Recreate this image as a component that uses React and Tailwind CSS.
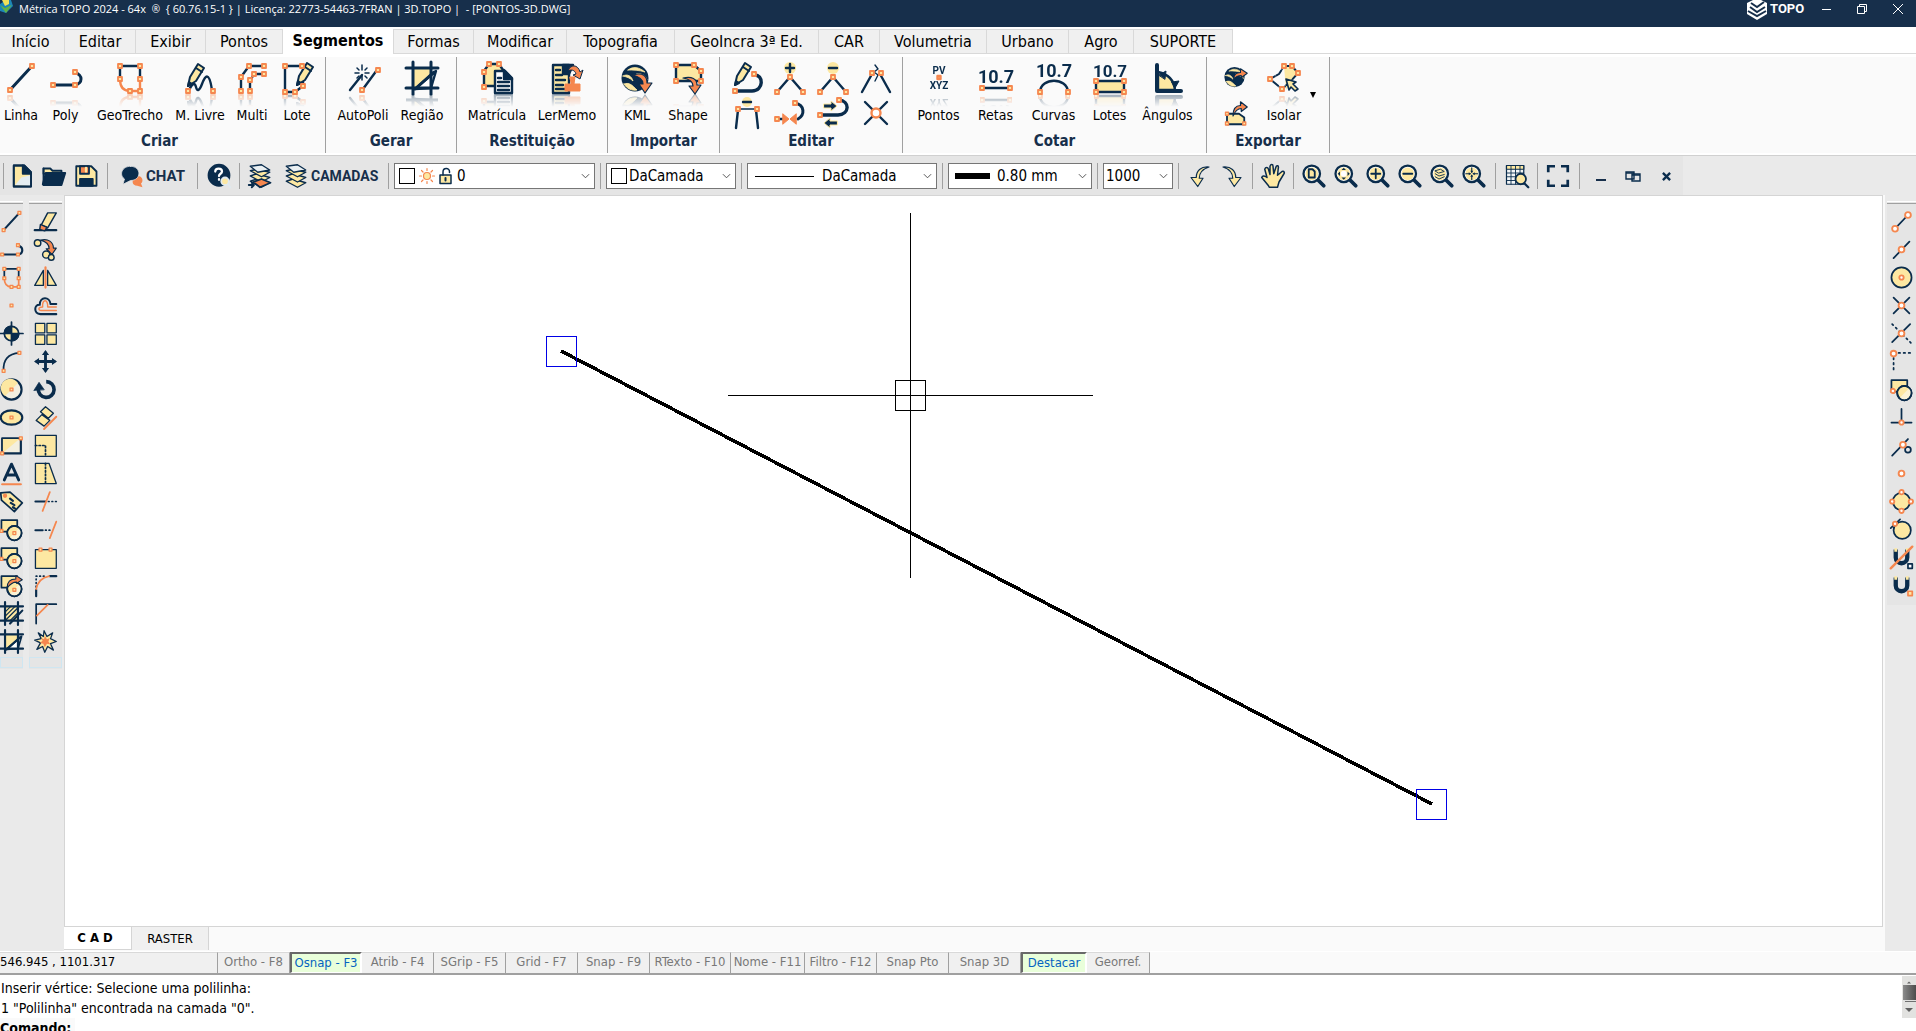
import { clsx } from 'clsx';

const NAVY = '#0a2c4c';
const ORANGE = '#f5874f';
const YELLOW = '#fde8a2';

/** Square vertex handle used by most of the drawing icons. */
function Node({ x, y }) {
  return <rect x={x - 2} y={y - 2} width="4" height="4" fill={YELLOW} stroke={ORANGE} strokeWidth="1.8" />;
}

/** Round snap handle. */
function Dot({ x, y, r = 4 }) {
  return <circle cx={x} cy={y} r={r} fill="#fff" stroke={ORANGE} strokeWidth="2.6" />;
}

function Pencil({ x = 0, y = 0 }) {
  return (
    <g transform={`translate(${x} ${y})`}>
      <path d="M3 23 5 14 13 1 19 5 11 18Z" fill={YELLOW} strokeWidth="2" />
      <path d="M11 5 17 9M3 23 4 19 7 21Z" strokeWidth="2" fill={NAVY} />
    </g>
  );
}

function Lens({ children }) {
  return (
    <>
      <path d="M20 20 29 29" strokeWidth="5" />
      <circle cx="13" cy="13" r="11" fill="#fff" strokeWidth="3" />
      <circle cx="13" cy="13" r="8.5" fill={YELLOW} stroke="none" />
      {children}
    </>
  );
}

function Globe() {
  return (
    <>
      <circle cx="14" cy="16" r="13.5" fill={NAVY} stroke="none" />
      <path d="M7 8C12 4 18 5 24 10 18 8 12 8 7 8ZM2 14C7 11 11 15 12 19 9 16 6 15 2 14ZM3 22C8 20 11 23 16 28 11 29 6 27 3 22ZM16 12C21 11 25 14 26 18 23 15 20 14 16 12Z" fill={YELLOW} stroke={YELLOW} strokeWidth="0.8" />
    </>
  );
}

function Measure({ size, y }) {
  return (
    <text x="16" y={y} fontSize={size} textAnchor="middle" fontFamily="'Liberation Sans Narrow', Roboto, sans-serif" fontWeight="700" fill={NAVY} stroke="none">
      10.7
    </text>
  );
}

const shapes = (
  <>
    <path d="M2 3H24V19H2Z" fill={YELLOW} />
    <circle cx="20" cy="21" r="10" fill={YELLOW} />
    <path d="M13 28 27 14A10 10 0 0 1 13 28Z" fill="#fbf3d6" stroke="none" />
    <circle cx="20" cy="21" r="10" />
  </>
);

const regionFrame = <path d="M0 6H32M0 26H32M7 0V32M25 0V32" strokeWidth="3" />;

const stack = (
  <>
    <path d="M3 23 12 20 29 25 18 31Z" fill={YELLOW} strokeWidth="1.8" />
    <path d="M3 16 12 13 29 18 18 24Z" fill={YELLOW} strokeWidth="1.8" />
    <path d="M3 9 12 7 29 11 18 17Z" fill={YELLOW} strokeWidth="1.8" />
    <path d="M3 3 18 1 29 8 13 11Z" fill="#eaf0f3" strokeWidth="1.8" />
  </>
);

const magnet = (
  <>
    <path d="M8 5V16A8 8 0 0 0 24 16V5" strokeWidth="6" strokeLinecap="butt" />
    <path d="M8 3V8M24 3V8" stroke={YELLOW} strokeWidth="4" strokeLinecap="butt" />
  </>
);

// All drawings live on a 32x32 grid and inherit a navy stroke from Icon
const ICONS = {
  line: <><path d="M5 28 27 4" strokeWidth="3" /><Node x={5} y={28} /><Node x={27} y={4} /></>,
  poly: <><path d="M3 23H25C33 22 33 12 25 11" strokeWidth="3" /><Node x={3} y={23} /><Node x={25} y={23} /><Node x={25} y={10} /></>,
  geo: (
    <>
      <path d="M6 17V4H26V17" />
      <path d="M6 17C6 25 9 29 16 29H26V17" stroke={ORANGE} />
      <Node x={6} y={4} /><Node x={26} y={4} /><Node x={6} y={17} /><Node x={26} y={17} /><Node x={16} y={29} /><Node x={26} y={29} />
    </>
  ),
  freehand: <><path d="M5 28C9 20 11 21 12 25S15 30 18 22 25 8 28 28" /><Pencil x={1} y={1} /><Node x={4} y={29} /><Node x={29} y={29} /></>,
  multi: (
    <>
      <path d="M5 29V15L13 4H28M14 29V19L18 12H28" />
      <Node x={5} y={29} /><Node x={5} y={15} /><Node x={13} y={4} /><Node x={28} y={4} />
      <Node x={14} y={29} /><Node x={14} y={18} /><Node x={18} y={12} /><Node x={28} y={12} />
    </>
  ),
  lot: <><path d="M4 4H22V24L14 30H4Z" /><Pencil x={13} y={0} /><Node x={4} y={4} /><Node x={21} y={4} /><Node x={22} y={24} /><Node x={14} y={30} /><Node x={4} y={30} /></>,
  autopoly: (
    <>
      <path d="M3 28 15 13M16 27 30 8" />
      <path d="M15 3V8M15 14V18M8 11H12M18 11H22M10 6 12 8M20 6 18 8M10 16 12 14M20 16 18 14" strokeWidth="1.5" />
      <Node x={15} y={28} /><Node x={31} y={8} />
    </>
  ),
  region: <><path d="M7 6H25V26H7Z" fill={YELLOW} stroke="none" /><path d="M9 27 30 9 25 26Z" fill="#fff" />{regionFrame}<path d="M9 27 28 10" strokeWidth="3" /></>,
  deed: (
    <>
      <path d="M3 24V9L8 2H18L22 8V24Z" fill={YELLOW} />
      <Node x={3} y={25} /><Node x={3} y={10} /><Node x={8} y={2} /><Node x={18} y={2} />
      <path d="M14 9H24L31 16V31H14Z" fill="#fff" />
      <path d="M23 8 31 17H23Z" fill={NAVY} />
      <path d="M17 16H20M17 20H28M17 24H28M17 28H28" />
    </>
  ),
  memo: (
    <>
      <path d="M2 3H18V31H2Z" fill={YELLOW} />
      <path d="M12 3 22 3 18 12H12Z" fill={NAVY} />
      <path d="M5 8H9M5 13H11M5 18H14M5 23H12M5 27H14" />
      <path d="M17 9C19 2 27 2 29 10L32 8 29 17 22 13 25 12C24 8 20 7 17 9Z" stroke={NAVY} fill={ORANGE} strokeWidth="1" />
      <path d="M19 15H24L23 22H29V29H14V22H20Z" stroke={ORANGE} fill={ORANGE} strokeWidth="1" />
    </>
  ),
  kml: <><Globe /><path d="M12 13C22 10 26 14 26 21H31L24 31 18 22H22C22 17 18 15 12 13Z" fill={ORANGE} strokeWidth="1.2" /></>,
  shape: (
    <>
      <path d="M4 3H22L29 9V19H4Z" fill={YELLOW} />
      <path d="M11 16C20 14 25 17 25 23H29L23 32 17 24H21C21 19 17 17 11 16Z" fill={ORANGE} strokeWidth="1.2" />
      <Node x={4} y={3} /><Node x={22} y={3} /><Node x={29} y={9} /><Node x={4} y={19} /><Node x={29} y={19} />
    </>
  ),
  editPoly: <><path d="M4 29H21C33 29 33 12 23 13" strokeWidth="3.4" /><Pencil x={1} y={0} /><Node x={23} y={12} /><Node x={4} y={29} /></>,
  addVertex: (
    <>
      <path d="M3 30 16 15 29 30" />
      <circle cx="16" cy="6" r="6" fill={YELLOW} stroke="none" /><path d="M12 6H20M16 2V10" />
      <Node x={16} y={15} /><Node x={3} y={30} /><Node x={29} y={30} />
    </>
  ),
  removeVertex: (
    <>
      <path d="M3 30 16 15 29 30" />
      <circle cx="16" cy="6" r="6" fill={YELLOW} stroke="none" /><path d="M12 6H20" />
      <Node x={16} y={15} /><Node x={3} y={30} /><Node x={29} y={30} />
    </>
  ),
  breakPoly: <><path d="M2 30 12 12M30 30 20 12" /><path d="M15 3 18 7 14 10 18 13 15 19" strokeWidth="1.4" /><Node x={12} y={11} /><Node x={21} y={11} /></>,
  removeSide: (
    <>
      <path d="M5 31 7 13M27 31 25 13" /><path d="M7 12H25" strokeWidth="1.4" />
      <circle cx="16" cy="5" r="5" fill={YELLOW} stroke="none" /><path d="M12 5H20" />
      <Node x={7} y={12} /><Node x={26} y={12} />
    </>
  ),
  joinEnds: (
    <>
      <path d="M21 6C31 8 31 18 24 22" strokeWidth="3" />
      <path d="M3 22H10" />
      <path d="M9 17 15 22 9 27ZM22 17 16 22 22 27Z" fill={ORANGE} stroke={ORANGE} strokeWidth="1" />
      <Node x={3} y={22} /><Node x={21} y={6} />
    </>
  ),
  invert: (
    <>
      <path d="M3 18H21C33 17 33 4 22 3" strokeWidth="3.4" />
      <path d="M7 7H14V4L20 9 14 14V11H7ZM20 24H13V21L7 26 13 31V28H20Z" fill={NAVY} stroke={YELLOW} strokeWidth="1" />
      <Node x={22} y={3} /><Node x={3} y={18} />
    </>
  ),
  cross: <><path d="M5 5 27 27M27 5 5 27" /><circle cx="16" cy="16" r="4.5" fill="#fff" stroke={ORANGE} /></>,
  points: (
    <>
      <g fontFamily="Roboto, sans-serif" fontWeight="700" fontSize="10" textAnchor="middle" fill={NAVY} stroke="none">
        <text x="16" y="12">PV</text>
        <text x="16" y="27">XYZ</text>
      </g>
      <rect x="14.5" y="14" width="3" height="3" fill={YELLOW} stroke={ORANGE} />
    </>
  ),
  lines: <><Measure size={18} y={21} /><path d="M2 26H30" /><Node x={2} y={26} /><Node x={30} y={26} /></>,
  curves: <><Measure size={18} y={15} /><path d="M2 30C3 15 29 15 30 30" /><Node x={2} y={30} /><Node x={30} y={30} /></>,
  lots: (
    <>
      <Measure size={17} y={15} />
      <path d="M2 19H30V30H2Z" fill={YELLOW} />
      <Node x={2} y={19} /><Node x={30} y={19} /><Node x={2} y={30} /><Node x={30} y={30} />
    </>
  ),
  angles: (
    <>
      <path d="M6 10C16 12 22 18 23 28H6Z" fill={YELLOW} />
      <path d="M5 3V29H29" strokeWidth="4" />
      <path d="M7 13 14 9 13 17ZM20 20 27 19 23 26Z" fill={NAVY} strokeWidth="1" />
    </>
  ),
  globeOut: <><Globe /><path d="M13 19C13 13 17 10 22 10V5L31 11 23 17V14C19 14 16 15 13 19Z" fill={ORANGE} strokeWidth="1.4" /></>,
  shapeOut: (
    <>
      <path d="M4 17H20L27 22V31H4Z" fill={YELLOW} />
      <path d="M12 20C12 10 16 6 22 6V1L31 8 23 14V10C18 10 15 13 12 20Z" fill={ORANGE} strokeWidth="1.6" />
      <Node x={4} y={17} /><Node x={4} y={30} /><Node x={27} y={30} />
    </>
  ),
  isolate: (
    <>
      <path d="M16 4H24L30 11 22 20 18 28Z" fill={YELLOW} stroke="none" />
      <path d="M16 4H24L30 11 22 20 14 27 2 17 11 12Z" strokeDasharray="7 2" strokeWidth="2" />
      <path d="M18 17 28 20 25 22 30 27 27 29 23 25 21 28Z" fill={YELLOW} strokeWidth="1.6" />
      <Node x={16} y={4} /><Node x={24} y={4} /><Node x={30} y={11} /><Node x={2} y={17} /><Node x={14} y={27} />
    </>
  ),
  newFile: <><path d="M5 2H19L28 11V30H5Z" fill={YELLOW} /><path d="M7 28 15 18 27 15V29Z" fill="#e4edf2" stroke="none" /><path d="M17 2 28 13H17Z" fill={NAVY} /><path d="M5 2H19L28 11V30H5Z" /></>,
  open: <><path d="M2 6H11L14 9H26V13H2Z" fill={YELLOW} /><path d="M1 27 5 12H31L26 28H2Z" fill={NAVY} /><path d="M2 6V27" /></>,
  save: (
    <>
      <path d="M3 3H23L30 10V29H3Z" fill={YELLOW} />
      <path d="M8 3H20V13H8Z" fill={ORANGE} /><path d="M16 5V10" stroke={YELLOW} strokeWidth="3" />
      <path d="M8 29V20H25V29Z" fill={NAVY} />
    </>
  ),
  chat: (
    <>
      <path d="M20 17C28 13 33 22 28 26L30 31 23 29C16 29 15 22 20 17Z" fill={ORANGE} stroke="none" />
      <path d="M14 3C29 3 29 22 14 22L4 27 6 20C-2 14 3 3 14 3Z" fill={NAVY} stroke="#e5e5e5" strokeWidth="1" />
    </>
  ),
  help: (
    <>
      <circle cx="16" cy="15" r="14" fill={NAVY} />
      <path d="M11 10C11 5 20 5 20 10 20 13 16 13 16 16M16 20V21" stroke="#fff" strokeWidth="3" />
      <circle cx="24" cy="23" r="5" fill={YELLOW} stroke="#dfe9ef" /><path d="M28 27 31 31" stroke="#dfe9ef" />
    </>
  ),
  layersMove: <>{stack}<path d="M7 24 18 20 30 25 16 31Z" fill={ORANGE} /><path d="M1 28H8M5 25 8 28 5 31" /></>,
  layers: stack,
  sun: (
    <>
      <circle cx="16" cy="16" r="7" fill={YELLOW} stroke={ORANGE} />
      <path d="M16 1V5M16 27V31M1 16H5M27 16H31M5 5 8 8M24 24 27 27M27 5 24 8M8 24 5 27" stroke={ORANGE} />
    </>
  ),
  lock: <><path d="M4 14H26V31H4Z" fill={YELLOW} strokeWidth="3" /><path d="M10 14V8C10-1 23-1 23 7V9" strokeWidth="3" /><path d="M15 20V25" strokeWidth="4" /></>,
  undo: <path d="M28 4C17 3 11 9 11 18H4L13 30 20 19H15C15 12 19 7 28 4Z" fill={YELLOW} strokeWidth="1.6" />,
  redo: <path d="M4 4C15 3 21 9 21 18H28L19 30 12 19H17C17 12 13 7 4 4Z" fill={YELLOW} strokeWidth="1.6" />,
  hand: <path d="M10 29 1 18C2 15 5 16 8 18L5 7C6 4 9 4 10 7L12 14 12 3C13 0 16 0 16 3L17 13 20 4C21 1 24 2 23 6L22 15 28 10C31 9 32 12 30 14L24 24 22 31H11Z" fill={YELLOW} strokeWidth="2" />,
  zoomPage: <Lens><path d="M9 7H14L17 10V18H9Z" fill={YELLOW} /></Lens>,
  zoomExtents: <Lens><path d="M13 5 10 8H16ZM13 21 10 18H16ZM5 13 8 10V16ZM21 13 18 10V16Z" fill={NAVY} stroke="none" /><circle cx="13" cy="13" r="4" fill="#fff" stroke="none" /></Lens>,
  zoomIn: <Lens><path d="M7 13H19M13 7V19" /></Lens>,
  zoomOut: <Lens><path d="M7 13H19" /></Lens>,
  zoomLayer: <Lens><path d="M7 9 14 7 19 10 12 12ZM7 13 12 16 19 14M7 17 12 20 19 17" strokeWidth="1.2" /></Lens>,
  zoomCenter: <Lens><path d="M13 5V11M13 15V21M5 13H11M15 13H21" strokeWidth="1.5" /><path d="M11 9H15L13 12ZM11 17H15L13 14ZM9 11V15L12 13ZM17 11V15L14 13Z" fill={NAVY} stroke="none" /></Lens>,
  table: (
    <>
      <path d="M2 2H25V27H2Z" fill="#f3f6f7" strokeWidth="1.6" /><path d="M2 2H25V7H2Z" fill={YELLOW} strokeWidth="1.6" />
      <path d="M2 12H25M2 17H25M2 22H25M8 2V27M14 2V27M20 2V27" strokeWidth="1.2" />
      <path d="M26 26 31 31" strokeWidth="3" /><circle cx="21" cy="20" r="7" fill={YELLOW} />
    </>
  ),
  frame: <path d="M3 11V3H12M20 3H29V11M29 21V29H20M12 29H3V21" strokeWidth="3.6" strokeLinecap="butt" strokeLinejoin="miter" />,
  dot: <Node x={16} y={16} />,
  target: <><path d="M16 0V32M0 16H32" /><circle cx="16" cy="16" r="10" fill={YELLOW} /><path d="M16 16V6A10 10 0 0 0 6 16ZM16 16V26A10 10 0 0 0 26 16Z" fill={NAVY} /></>,
  arc: <><path d="M5 29C4 14 11 5 27 4" /><Node x={5} y={29} /><Node x={27} y={4} /></>,
  circle: <><circle cx="16" cy="16" r="14" fill="#f3efdf" strokeWidth="3" /><path d="M7 25A13 13 0 1 1 25 7Z" fill={YELLOW} stroke="none" /><Node x={16} y={16} /></>,
  ellipse: <><ellipse cx="16" cy="16" rx="15" ry="10" fill={YELLOW} strokeWidth="3" /><Node x={16} y={16} /></>,
  rect: <><path d="M3 6H29V27H3Z" fill="#f3efdf" strokeWidth="3" /><path d="M4 26V7H27Z" fill={YELLOW} stroke="none" /><Node x={3} y={27} /><Node x={29} y={6} /></>,
  text: <><path d="M6 25 16 3 26 25M10 18H22" strokeWidth="4" /><path d="M3 31H29" stroke={ORANGE} strokeWidth="3" /></>,
  tag: <><path d="M1 4 14 3 31 18 20 30 2 14Z" fill={YELLOW} /><path d="M14 12 18 15M15 18 20 21M18 24 21 26" strokeWidth="3" /><circle cx="7" cy="8" r="3" fill={ORANGE} stroke="none" /></>,
  block: <>{shapes}<Node x={20} y={21} /><Node x={2} y={18} /></>,
  blockOut: <>{shapes}<path d="M10 19C10 10 16 7 22 7V2L31 8 23 13V11C18 11 15 13 10 19Z" fill={ORANGE} strokeWidth="1.4" /><Node x={20} y={22} /></>,
  hatch: (
    <>
      <path d="M7 6H25V26H7Z" fill={YELLOW} stroke="none" />{regionFrame}
      <path d="M8 13 15 6M8 19 21 6M8 25 25 8M14 26 25 15" strokeWidth="1.6" /><path d="M14 30 31 12" strokeWidth="3" />
    </>
  ),
  eraser: <><path d="M1 28H31" strokeWidth="3" /><path d="M10 21 19 4H31L19 25Z" fill={YELLOW} strokeWidth="2" /><path d="M9 20 18 24 15 29 8 27Z" fill={ORANGE} strokeWidth="2" /></>,
  copy: <><path d="M9 3C20 0 27 6 27 14H31L25 23 17 15H21C21 9 17 5 9 3Z" fill={ORANGE} strokeWidth="1.6" /><circle cx="5" cy="7" r="4.5" fill={YELLOW} strokeWidth="2" /><circle cx="17" cy="23" r="5" fill={YELLOW} strokeWidth="2" /><circle cx="24" cy="27" r="4" fill={YELLOW} strokeWidth="2" /></>,
  mirror: <><path d="M13 6V27H1ZM19 6V27H31Z" fill={YELLOW} strokeWidth="1.8" /><path d="M16 2V30" stroke={ORANGE} strokeWidth="3" /></>,
  offset: <><path d="M31 28H9C-1 27 0 14 8 15 8 3 22 3 23 14H31" strokeWidth="2.8" /><path d="M31 23H10C5 22 6 18 12 18 11 6 20 7 19 18H31" stroke={ORANGE} strokeWidth="2" /></>,
  array: <path d="M2 2H15V15H2ZM18 2H31V15H18ZM2 18H15V31H2ZM18 18H31V31H18Z" fill={YELLOW} strokeWidth="1.8" />,
  move: <><path d="M16 4V28M4 16H28" strokeWidth="4" /><path d="M16 0 21 7H11ZM16 32 21 25H11ZM0 16 7 11V21ZM32 16 25 11V21Z" fill={NAVY} stroke="none" /></>,
  rotate: <><path d="M17 5A11 11 0 1 1 6 15" strokeWidth="5" strokeLinecap="butt" /><path d="M0 17 7 6 14 16Z" fill={NAVY} strokeWidth="1" /></>,
  align: <><path d="M9 8 16 1 27 10 20 17ZM3 20 11 12 22 20 14 28Z" fill={YELLOW} strokeWidth="1.8" /><path d="M14 32 31 15" stroke={ORANGE} strokeWidth="2.6" /></>,
  scale: <><path d="M2 2H31V31H2Z" fill={YELLOW} strokeWidth="1.8" /><path d="M2 16H16V31" strokeDasharray="2 3" /></>,
  stretch: <><path d="M2 2H21L31 30H2Z" fill={YELLOW} strokeWidth="1.8" /><path d="M16 2V30" strokeDasharray="2 3" /></>,
  trim: <><path d="M2 16H16" strokeWidth="3" /><path d="M20 16H31" strokeDasharray="1 4" /><path d="M22 3 12 29" stroke={ORANGE} /></>,
  extend: <><path d="M2 17H12" strokeWidth="3" /><path d="M16 17H24" strokeDasharray="1 4" /><path d="M31 5 22 28" stroke={ORANGE} /></>,
  splitBox: <><path d="M2 5H31V31H2Z" fill={YELLOW} strokeWidth="1.8" /><Node x={9} y={5} /><Node x={23} y={5} /></>,
  fillet: <><path d="M3 31V22M22 3H31" strokeWidth="3" /><path d="M3 18V3H18" strokeDasharray="1 4" /><path d="M3 21C5 11 11 5 21 3" stroke={ORANGE} /></>,
  chamfer: <><path d="M3 30V3H31" /><path d="M4 19 19 4" stroke={ORANGE} /></>,
  explode: (
    <>
      <path d="M14 1 18 9 26 4 23 12 31 16 23 19 27 28 19 23 15 31 12 23 4 27 9 18 1 14 10 12 6 4 13 9Z" fill={YELLOW} strokeWidth="1.8" />
      <path d="M15 8 18 13 22 11 20 16 23 20 18 19 15 24 13 19 8 18 12 15 10 11 14 13Z" fill={ORANGE} stroke="none" />
    </>
  ),
  snapEnd: <><path d="M7 26 25 7" /><Dot x={7} y={26} /><Dot x={25} y={7} /></>,
  snapMid: <><path d="M5 28 27 5" /><Dot x={16} y={16} /></>,
  snapCenter: <><circle cx="16" cy="16" r="14" fill={YELLOW} /><Dot x={16} y={16} r={3} /></>,
  snapInt: <><path d="M5 5 27 27M27 5 5 27" /><Dot x={16} y={16} /></>,
  snapApp: <><path d="M28 3 3 28" /><path d="M3 3 29 29" strokeDasharray="2 5" /><Dot x={16} y={16} /></>,
  snapExt: <><path d="M12 4H31M5 11V31" strokeDasharray="2 5" /><Dot x={5} y={5} /></>,
  snapInsert: <>{shapes}<Dot x={4} y={18} r={3} /></>,
  snapPerp: <><path d="M16 4V22M2 23H30" /><Dot x={16} y={23} r={3} /></>,
  snapNear: <><path d="M3 30 25 7" /><circle cx="25" cy="22" r="4" /><Dot x={18} y={15} /></>,
  snapNode: <Dot x={16} y={16} />,
  snapQuad: <><circle cx="16" cy="16" r="12" fill={YELLOW} /><Dot x={16} y={3} r={3} /><Dot x={16} y={29} r={3} /><Dot x={3} y={16} r={3} /><Dot x={29} y={16} r={3} /></>,
  snapTan: <><circle cx="17" cy="17" r="12" fill={YELLOW} /><path d="M1 14 14 2" /><Dot x={7} y={8} r={3} /></>,
  snapOff: <>{magnet}<path d="M1 31 31 1" stroke={ORANGE} strokeWidth="3.4" /><path d="M25 25H31V31H25Z" fill="#fff" /></>,
  snapOn: <>{magnet}<path d="M25 24H31V30H25Z" fill={YELLOW} stroke={ORANGE} /></>,
};

function Icon({ name, className }) {
  return (
    <svg
      viewBox="0 0 32 32"
      className={clsx('block shrink-0 overflow-visible', className)}
      fill="none"
      stroke={NAVY}
      strokeWidth="2.4"
      strokeLinecap="round"
      strokeLinejoin="round"
      aria-hidden="true"
    >
      {ICONS[name]}
    </svg>
  );
}

const TABS = [
  ['Início', 'w-[65px] pr-[3px]'],
  ['Editar', 'w-[71px]'],
  ['Exibir', 'w-[70px]'],
  ['Pontos', 'w-[77px]'],
  ['Segmentos', 'w-[111px]'],
  ['Formas', 'w-[80px]'],
  ['Modificar', 'w-[93px]'],
  ['Topografia', 'w-[108px]'],
  ['GeoIncra 3ª Ed.', 'w-[144px]'],
  ['CAR', 'w-[61px]'],
  ['Volumetria', 'w-[107px]'],
  ['Urbano', 'w-[82px]'],
  ['Agro', 'w-[65px]'],
  ['SUPORTE', 'w-[99px]'],
];

const LEFT_A = ['line', 'poly', 'geo', 'dot', 'target', 'arc', 'circle', 'ellipse', 'rect', 'text', 'tag', 'block', 'block', 'blockOut', 'hatch', 'region'];
const LEFT_B = ['eraser', 'copy', 'mirror', 'offset', 'array', 'move', 'rotate', 'align', 'scale', 'stretch', 'trim', 'extend', 'splitBox', 'fillet', 'chamfer', 'explode'];
const RIGHT = ['snapEnd', 'snapMid', 'snapCenter', 'snapInt', 'snapApp', 'snapExt', 'snapInsert', 'snapPerp', 'snapNear', 'snapNode', 'snapQuad', 'snapTan', 'snapOff', 'snapOn'];
const EDIT_TOOLS = ['editPoly', 'addVertex', 'removeVertex', 'breakPoly', 'removeSide', 'joinEnds', 'invert', 'cross'];
const ZOOMS = ['zoomPage', 'zoomExtents', 'zoomIn', 'zoomOut', 'zoomLayer', 'zoomCenter'];

const STATUS = [
  ['Ortho - F8', 'w-[72px]'],
  ['Osnap - F3', 'w-[72px]', true],
  ['Atrib - F4', 'w-[72px]'],
  ['SGrip - F5', 'w-[72px]'],
  ['Grid - F7', 'w-[72px]'],
  ['Snap - F9', 'w-[72px]'],
  ['RTexto - F10', 'w-[81px]'],
  ['Nome - F11', 'w-[74px]'],
  ['Filtro - F12', 'w-[72px]'],
  ['Snap Pto', 'w-[72px]'],
  ['Snap 3D', 'w-[72px]'],
  ['Destacar', 'w-[66px]', true],
  ['Georref.', 'w-[63px]'],
];

function TitleBar() {
  return (
    <header className="flex h-[27px] shrink-0 items-start bg-[#172f4b] text-white">
      <svg viewBox="0 0 14 14" className="h-[14px] w-[14px]" aria-hidden="true">
        <path d="M0 4 6 0H11L13 6 6 13 0 11Z" fill="#1c86b8" />
        <path d="M0 5 5 8 12 5 6 13Z" fill="#62b146" />
        <path d="M2 0H9V4L5 6Z" fill="#f2e15a" />
      </svg>
      <h1 className="ml-[5px] font-['Open_Sans',sans-serif] text-[11px] leading-[18px] whitespace-pre">
        Métrica TOPO 2024 - 64x  <span className="text-[10px]">®</span> {' { 60.76.15-1 } | Licença: 22773-54463-7FRAN | 3D.TOPO |  - [PONTOS-3D.DWG]'}
      </h1>
      <div className="ml-auto flex h-[18px] items-center">
        <svg viewBox="0 0 22 22" className="h-[22px] w-[22px]" fill="none" stroke="#172f4b" aria-hidden="true">
          <path d="M1 5 11 0 21 5V16L11 22 1 16Z" fill="#fff" stroke="none" />
          <path d="M5 5 11 9 18 4M4 9 11 14 19 9M2 13 11 18 20 13" strokeWidth="2" />
        </svg>
        <span className="ml-[2px] w-[34px] font-[Roboto,sans-serif] text-[13px] leading-4 font-bold">TOPO</span>
        <button aria-label="Minimizar" className="ml-[4px] flex h-[18px] w-[36px] items-center justify-center">
          <span className="h-px w-[9px] bg-white" />
        </button>
        <button aria-label="Restaurar" className="flex h-[18px] w-[36px] items-center justify-center">
          <svg viewBox="0 0 10 10" className="h-[10px] w-[10px]" fill="none" stroke="#fff">
            <path d="M.5 2.5H7.5V9.5H.5ZM2.5 2.5V.5H9.5V7.5H7.5" />
          </svg>
        </button>
        <button aria-label="Fechar" className="flex h-[18px] w-[36px] items-center justify-center">
          <svg viewBox="0 0 10 10" className="h-[10px] w-[10px]" fill="none" stroke="#fff">
            <path d="M0 0 10 10M10 0 0 10" />
          </svg>
        </button>
      </div>
    </header>
  );
}

function RibbonTabs() {
  return (
    <nav className="flex h-[30px] shrink-0 items-start border-b-[3px] border-white bg-white pt-[2px] text-[16px]" role="tablist">
      {TABS.map(([label, width]) => {
        const active = label === 'Segmentos';
        return (
          <button
            key={label}
            role="tab"
            aria-selected={active}
            className={clsx(
              'h-[25px] shrink-0 border-r border-[#d9d9d9] text-center leading-[23px] whitespace-nowrap',
              width,
              active ? 'bg-white pb-[3px] font-bold' : 'border-t border-b bg-[#f0f0f0]',
            )}
          >
            {label}
          </button>
        );
      })}
      <div className="h-[25px] flex-1 border-b border-[#d9d9d9]" />
    </nav>
  );
}

function BigTool({ icon, label, width }) {
  return (
    <button className={clsx('flex shrink-0 flex-col items-center', width)}>
      <span className="mb-[13px] block [-webkit-box-reflect:below_0px_linear-gradient(transparent_60%,rgba(0,0,0,0.4))]">
        <Icon name={icon} className="h-[32px] w-[32px]" />
      </span>
      <span className="text-[14px] leading-4 whitespace-nowrap">{label}</span>
    </button>
  );
}

function Group({ title, width, children }) {
  return (
    <section className={clsx('flex shrink-0 flex-col border-r border-[#a0a0a0]', width)}>
      <div className="flex h-[73px] justify-center pt-[5px]">{children}</div>
      <h2 className="text-center text-[15px] leading-[23px] font-bold text-[#172f4b]">{title}</h2>
    </section>
  );
}

function Ribbon() {
  return (
    <div className="flex h-[96px] shrink-0 bg-[#fafafa]">
      <Group title="Criar" width="w-[326px] pr-[6px]">
        <BigTool icon="line" label="Linha" width="w-[42px]" />
        <BigTool icon="poly" label="Poly" width="w-[47px]" />
        <BigTool icon="geo" label="GeoTrecho" width="w-[82px]" />
        <BigTool icon="freehand" label="M. Livre" width="w-[58px]" />
        <BigTool icon="multi" label="Multi" width="w-[46px]" />
        <BigTool icon="lot" label="Lote" width="w-[44px]" />
      </Group>
      <Group title="Gerar" width="w-[131px]">
        <span className="w-[3px]" />
        <BigTool icon="autopoly" label="AutoPoli" width="w-[59px]" />
        <BigTool icon="region" label="Região" width="w-[59px]" />
      </Group>
      <Group title="Restituição" width="w-[151px]">
        <BigTool icon="deed" label="Matrícula" width="w-[70px]" />
        <BigTool icon="memo" label="LerMemo" width="w-[70px]" />
      </Group>
      <Group title="Importar" width="w-[112px]">
        <BigTool icon="kml" label="KML" width="w-[51px]" />
        <BigTool icon="shape" label="Shape" width="w-[51px]" />
        <span className="w-[2px]" />
      </Group>
      <Group title="Editar" width="w-[183px]">
        <div className="grid grid-cols-4 content-start gap-x-[11px] gap-y-[3px]">
          {EDIT_TOOLS.map((name) => (
            <button key={name} aria-label={name}>
              <Icon name={name} className="h-[32px] w-[32px]" />
            </button>
          ))}
        </div>
      </Group>
      <Group title="Cotar" width="w-[304px]">
        <BigTool icon="points" label="Pontos" width="w-[56px]" />
        <BigTool icon="lines" label="Retas" width="w-[58px]" />
        <BigTool icon="curves" label="Curvas" width="w-[58px]" />
        <BigTool icon="lots" label="Lotes" width="w-[54px]" />
        <BigTool icon="angles" label="Ângulos" width="w-[62px]" />
      </Group>
      <Group title="Exportar" width="w-[123px]">
        <div className="flex w-[44px] flex-col items-center gap-3 pt-[3px]">
          <button aria-label="Exportar KML"><Icon name="globeOut" className="h-[24px] w-[24px]" /></button>
          <button aria-label="Exportar Shape"><Icon name="shapeOut" className="h-[24px] w-[24px]" /></button>
        </div>
        <BigTool icon="isolate" label="Isolar" width="w-[52px]" />
        <button aria-label="Mais opções" className="flex w-[12px] items-center pb-[3px]">
          <svg viewBox="0 0 6 6" className="h-[6px] w-[6px]"><path d="M0 0H6L3 6Z" fill="#000" /></svg>
        </button>
      </Group>
    </div>
  );
}

function Separator({ tight }) {
  return <span className={clsx('h-[26px] w-px shrink-0 bg-[#a0a0a0]', tight ? 'mx-[4px]' : 'mx-[5px]')} />;
}

function Tool({ icon, label }) {
  return (
    <button aria-label={label || icon} className="flex h-[30px] w-[32px] shrink-0 items-center justify-center">
      <Icon name={icon} className="h-[24px] w-[24px]" />
    </button>
  );
}

function Combo({ label, value, width, selectClass, children }) {
  return (
    <div className={clsx('flex h-[26px] shrink-0 items-center border border-[#767676] bg-white pr-[4px] text-[15px]', width)}>
      {children}
      <select aria-label={label} className={clsx('min-w-0 flex-1 appearance-none bg-transparent leading-5 outline-none', selectClass)} defaultValue={value}>
        <option>{value}</option>
      </select>
      <svg viewBox="0 0 10 6" className="h-[6px] w-[9px] shrink-0" fill="none" stroke="#444" aria-hidden="true">
        <path d="M1 1 5 5 9 1" />
      </svg>
    </div>
  );
}

function Toolbar() {
  return (
    <div className="flex h-[39px] shrink-0 bg-[#eaeaea]">
      <div className="flex items-center bg-[#e5e5e5] pt-px">
        <span className="mr-[2px] h-[26px] w-[4px] border-r border-[#a0a0a0]" />
        <Tool icon="newFile" label="Novo" />
        <Tool icon="open" label="Abrir" />
        <Tool icon="save" label="Salvar" />
        <Separator />
        <button className="flex h-[30px] w-[79px] items-center justify-center gap-[2px] font-[Roboto,sans-serif] text-[15px] font-bold text-[#172f4b]">
          <Icon name="chat" className="h-[24px] w-[24px]" />
          CHAT
        </button>
        <Separator />
        <Tool icon="help" label="Ajuda" />
        <Separator tight />
        <Tool icon="layersMove" label="Mover camadas" />
        <button className="ml-[8px] flex h-[30px] w-[99px] items-center gap-[3px] font-[Roboto,sans-serif] text-[14px] font-bold text-[#172f4b]">
          <Icon name="layers" className="h-[24px] w-[24px]" />
          CAMADAS
        </button>
        <Separator />
        <Combo label="Camada" value="0" width="w-[201px]" selectClass="pl-[3px]">
          <span className="ml-[4px] h-[16px] w-[16px] border border-black" />
          <Icon name="sun" className="ml-[4px] h-[16px] w-[16px]" />
          <Icon name="lock" className="ml-[3px] h-[16px] w-[16px]" />
        </Combo>
        <Separator />
        <Combo label="Cor" value="DaCamada" width="w-[130px]" selectClass="pl-[2px]">
          <span className="ml-[4px] h-[16px] w-[16px] border border-black" />
        </Combo>
        <Separator />
        <Combo label="Tipo de linha" value="DaCamada" width="w-[190px]" selectClass="pl-[8px]">
          <span className="ml-[7px] h-px w-[59px] bg-black" />
        </Combo>
        <Separator />
        <Combo label="Espessura" value="0.80 mm" width="w-[144px]" selectClass="pl-[7px]">
          <span className="ml-[6px] h-[6px] w-[35px] bg-black" />
        </Combo>
        <Separator />
        <Combo label="Escala" value="1000" width="w-[70px]" selectClass="pl-[2px]" />
        <Separator />
        <Tool icon="undo" label="Desfazer" />
        <Tool icon="redo" label="Refazer" />
        <Separator tight />
        <Tool icon="hand" label="Mover vista" />
        <Separator tight />
        {ZOOMS.map((name) => <Tool key={name} icon={name} />)}
        <Separator />
        <Tool icon="table" label="Tabela" />
        <Separator tight />
        <Tool icon="frame" label="Tela cheia" />
        <Separator />
        <button aria-label="Minimizar desenho" className="flex h-[30px] w-[32px] items-center justify-center pt-[8px]">
          <span className="h-[2px] w-[10px] bg-[#172f4b]" />
        </button>
        <button aria-label="Restaurar desenho" className="flex h-[30px] w-[32px] items-center justify-center">
          <svg viewBox="0 0 16 11" className="h-[11px] w-[16px]" fill="none" stroke={NAVY} strokeWidth="1.4">
            <path d="M1 1H9V8H1ZM7 3H15V10H7Z" /><path d="M1 2H9M7 4H15" />
          </svg>
        </button>
        <button aria-label="Fechar desenho" className="flex h-[30px] w-[34px] items-center justify-center">
          <svg viewBox="0 0 10 10" className="h-[9px] w-[9px]" fill="none" stroke={NAVY} strokeWidth="2.6">
            <path d="M1 1 9 9M9 1 1 9" />
          </svg>
        </button>
      </div>
    </div>
  );
}

function SideBar({ icons, className, slot }) {
  return (
    <div className={clsx('flex flex-col self-start bg-[#e5e5e5]', className)}>
      <span className="mb-[3px] h-[3px] border-t border-b border-t-white border-b-[#a0a0a0]" />
      {icons.map((name, i) => (
        <button key={`${name}${i}`} aria-label={name} className="flex h-[28px] items-center justify-center">
          <Icon name={name} className="h-[23px] w-[23px]" />
        </button>
      ))}
      {slot && <span className="mt-[2px] mb-px h-[11px] border border-[#cfe6f1]" />}
    </div>
  );
}

/** Drawing area: the selected polyline, its grips and the pick cursor. */
function Canvas() {
  return (
    <svg className="block min-h-0 w-full flex-1" shapeRendering="crispEdges" fill="none" role="img" aria-label="Desenho">
      <path d="M496 155 1367 608" stroke="#000" strokeWidth="3.5" />
      <path d="M481.500 140.500H511.500V170.500H481.500ZM1351.500 593.500H1381.500V623.500H1351.500Z" stroke="#0000e6" />
      <path d="M845.500 17V382M663 199.500H1028M830.500 184.500H860.500V214.500H830.500Z" stroke="#000" />
    </svg>
  );
}

function StatusBar() {
  return (
    <div className="flex h-[24px] shrink-0 items-stretch border-t border-b-2 border-t-white border-b-[#a0a0a0] bg-[#fafafa] text-[13px]">
      <output className="w-[218px] shrink-0 border-t border-r border-t-[#d9d9d9] border-r-[#a0a0a0] bg-[#f0f0f0] leading-[18px]">
        546.945 , 1101.317
      </output>
      {STATUS.map(([label, width, on]) => (
        <button
          key={label}
          aria-pressed={!!on}
          className={clsx(
            'shrink-0 text-center leading-[18px] whitespace-nowrap',
            width,
            on
              ? 'border-t-2 border-r-2 border-b border-l-2 border-t-[#696969] border-r-white border-b-white border-l-[#696969] bg-[#e9ffda] text-[#0563c1]'
              : 'border-t border-r border-t-[#d9d9d9] border-r-[#a0a0a0] bg-[#f0f0f0] pb-[2px] text-[#787878]',
          )}
        >
          {label}
        </button>
      ))}
    </div>
  );
}

function CommandLog() {
  return (
    <div className="flex h-[56px] shrink-0 overflow-hidden bg-white">
      <div className="flex-1 pt-[3px] text-[14px] leading-5">
        <p className="pl-px">Inserir vértice: Selecione uma polilinha:</p>
        <p className="pl-px">1 "Polilinha" encontrada na camada "0".</p>
        <p className="inline-block bg-[#fafafa] pr-1 font-bold">Comando:</p>
      </div>
      <div className="mt-px flex h-[42px] w-[14px] flex-col items-center bg-[#e2e2e0]">
        <svg viewBox="0 0 8 4" className="mt-[5px] h-[3px] w-[4px]"><path d="M4 0 8 4H0Z" fill="#606060" /></svg>
        <span className="mt-px h-[15px] w-[13px] self-end bg-linear-to-r from-[#8c8c8c] to-[#4c4c4c]" />
        <span className="mt-px h-px w-[11px] self-end bg-[#707070]" />
        <svg viewBox="0 0 8 4" className="mt-[6px] h-[4px] w-[8px]"><path d="M0 0H8L4 4Z" fill="#606060" /></svg>
      </div>
    </div>
  );
}

export default function App() {
  return (
    <div className="flex h-screen flex-col overflow-hidden bg-white font-['DejaVu_Sans_Condensed','DejaVu_Sans',sans-serif] text-black">
      <TitleBar />
      <RibbonTabs />
      <Ribbon />
      <div className="h-[3px] shrink-0 border-b border-[#d0d0d0] bg-white" />
      <Toolbar />
      <div className="flex min-h-0 flex-1 bg-[#eaeaea]">
        <div className="flex w-[64px] shrink-0 gap-[6px] pt-[6px]">
          <SideBar icons={LEFT_A} className="w-[23px]" slot />
          <SideBar icons={LEFT_B} className="w-[33px]" slot />
        </div>
        <main className="flex min-w-0 flex-1 flex-col bg-[#fafafa]">
          <div className="mr-[2px] flex min-h-0 flex-1 flex-col border border-[#d5d5d5] bg-white">
            <Canvas />
          </div>
          <div className="flex h-[24px] shrink-0 text-[13px]" role="tablist">
            <button role="tab" aria-selected className="h-[23px] w-[68px] border-r border-b border-[#d5d5d5] bg-white pr-[5px] font-bold">C A D</button>
            <button role="tab" aria-selected={false} className="h-[23px] w-[77px] border-r border-[#d5d5d5] bg-[#f0f0f0]">RASTER</button>
          </div>
        </main>
        <div className="w-[31px] shrink-0 pt-[6px] pl-[2px]">
          <SideBar icons={RIGHT} className="w-full pb-[6px]" />
        </div>
      </div>
      <StatusBar />
      <CommandLog />
    </div>
  );
}
